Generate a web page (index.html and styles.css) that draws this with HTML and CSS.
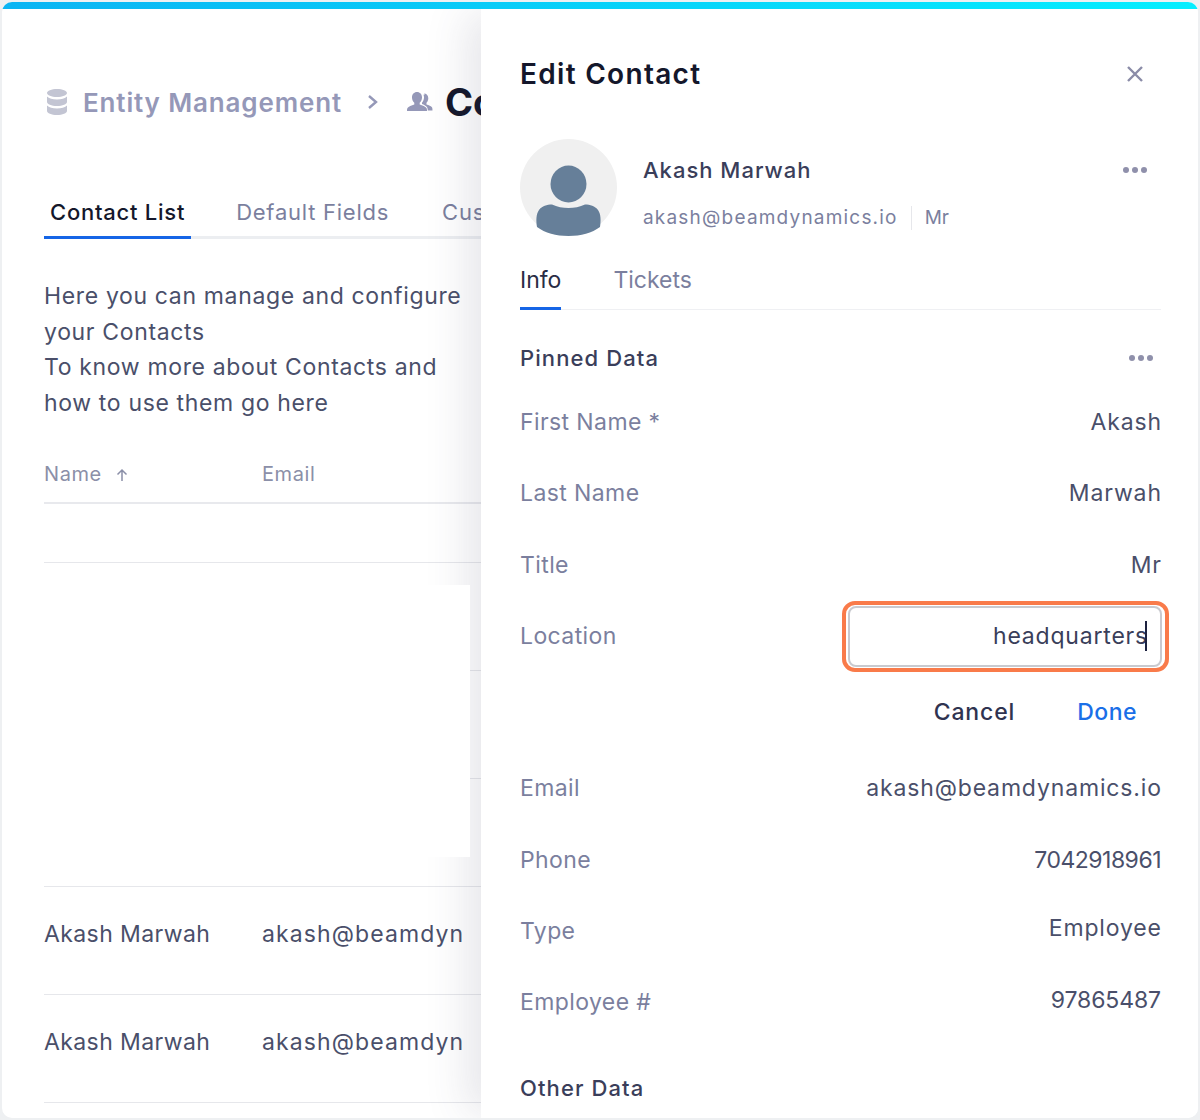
FILE: index.html
```html
<!DOCTYPE html>
<html lang="en">
<head>
<meta charset="utf-8">
<title>Edit Contact</title>
<link rel="stylesheet" href="styles.css">
</head>
<body>
<div class="frame">
  <div class="topbar"></div>
  <div class="stage">
    <main class="page">
      <div class="crumbs">
        <svg class="ic-db" width="22" height="28" viewBox="0 0 22 28"><path fill="#c3c5d3" d="M11 1c5.500 0 10 1.800 10 4s-4.500 4-10 4S1 7.200 1 5s4.500-4 10-4zM1 8.500c1.800 1.900 5.700 3 10 3s8.200-1.100 10-3V14c0 2.200-4.500 4-10 4S1 16.200 1 14zM1 17.500c1.800 1.900 5.700 3 10 3s8.200-1.100 10-3V23c0 2.200-4.500 4-10 4S1 25.200 1 23z"/></svg>
        <span class="crumb">Entity Management</span>
        <svg class="ic-chev" width="12" height="16" viewBox="0 0 12 16"><path d="M2 2l7 6-7 6" fill="none" stroke="#9598b8" stroke-width="2.400"/></svg>
        <svg class="ic-users" width="28" height="24" viewBox="0 0 28 24"><path fill="#9598b8" d="M11 2c3 0 5 2.300 5 5.500 0 2.200-.9 4.200-2.300 5.300v1.700c2.700.8 5.800 2 6.800 3.500.5.800.5 2.500.5 3H1c0-.5 0-2.200.5-3 1-1.500 4.100-2.700 6.800-3.500v-1.700C6.900 11.700 6 9.700 6 7.500 6 4.300 8 2 11 2z"/><path fill="#9598b8" d="M18 3.500c2.400 0 4.300 2 4.300 4.800 0 1.900-.7 3.500-1.800 4.500v1.600c2.200.7 4.800 1.700 5.600 3 .4.700.4 2.600.4 3.100h-4.700c0-1.400-.3-3-1.100-3.800-1.200-1.200-2.700-2.100-4.700-2.800v-1.200c1.300-1.500 2-3.500 2-5.200 0-1-.2-1.900-.5-2.700.6-.2 1.200-.3 1.500-.3z"/></svg>
        <span class="crumb-current">Contacts</span>
      </div>
      <nav class="tabs">
        <span class="tab tab-active">Contact List</span>
        <span class="tab">Default Fields</span>
        <span class="tab">Custom Fields</span>
      </nav>
      <p class="intro">Here you can manage and configure<br>your Contacts<br>To know more about Contacts and<br>how to use them go here</p>
      <div class="thead">
        <span class="col-name">Name <svg class="ic-up" width="14" height="14" viewBox="0 0 14 14"><path d="M7 13V2M2.500 6.500L7 2l4.500 4.500" fill="none" stroke="#8b8fa8" stroke-width="1.500"/></svg></span>
        <span class="col-email">Email</span>
      </div>
      <div class="row row-short"></div>
      <div class="row"></div>
      <div class="row"></div>
      <div class="row"></div>
      <div class="row"><span class="col-name">Akash Marwah</span><span class="col-email">akash@beamdyn</span></div>
      <div class="row"><span class="col-name">Akash Marwah</span><span class="col-email">akash@beamdyn</span></div>
    </main>

    <aside class="drawer">
      <header class="drawer-head">
        <h1 class="drawer-title">Edit Contact</h1>
        <svg class="ic-close" width="20" height="20" viewBox="0 0 20 20"><path d="M3 3l14 14M17 3L3 17" fill="none" stroke="#8b8ca8" stroke-width="2.400"/></svg>
      </header>
      <section class="profile">
        <svg class="avatar" width="97" height="97" viewBox="0 0 97 97"><circle cx="48.500" cy="48.500" r="48.500" fill="#f0f0f0"/><ellipse cx="48.500" cy="45" rx="18" ry="18.500" fill="#667f99"/><path fill="#667f99" d="M17 88c-1-6-1-13 2-17 3-4 8-5.500 13-5.500 5 2.500 11 3.500 16.500 3.500s11.500-1 16.500-3.500c5 0 10 1.500 13 5.500 3 4 3 11 2 17-8 6-19 9-31.500 9S25 94 17 88z"/></svg>
        <div class="profile-text">
          <div class="profile-name">Akash Marwah</div>
          <div class="profile-sub"><span>akash@beamdynamics.io</span><span class="profile-title">Mr</span></div>
        </div>
        <span class="dots dots-profile"><i></i><i></i><i></i></span>
      </section>
      <nav class="drawer-tabs">
        <span class="dtab dtab-active">Info</span>
        <span class="dtab">Tickets</span>
      </nav>
      <div class="section-head">
        <h2 class="section-title">Pinned Data</h2>
        <span class="dots"><i></i><i></i><i></i></span>
      </div>
      <dl class="fields">
        <div class="field"><dt>First Name *</dt><dd>Akash</dd></div>
        <div class="field"><dt>Last Name</dt><dd>Marwah</dd></div>
        <div class="field"><dt>Title</dt><dd>Mr</dd></div>
        <div class="field"><dt>Location</dt><dd class="ring"><span class="input"><span>headquarters</span><i class="caret"></i></span></dd></div>
        <div class="actions"><span class="btn-cancel">Cancel</span><span class="btn-done">Done</span></div>
        <div class="field"><dt>Email</dt><dd>akash@beamdynamics.io</dd></div>
        <div class="field"><dt>Phone</dt><dd class="num">7042918961</dd></div>
        <div class="field"><dt>Type</dt><dd class="raised">Employee</dd></div>
        <div class="field"><dt>Employee #</dt><dd class="num-wide raised">97865487</dd></div>
      </dl>
      <h2 class="section-title other">Other Data</h2>
    </aside>
    <div class="mask"></div>
  </div>
</div>
</body>
</html>
```
FILE: styles.css
```css
* { box-sizing: border-box; }
html, body { margin: 0; padding: 0; height: 100%; }
body { background: #eef0f2; font-family: "Inter", "Liberation Sans", sans-serif; overflow: hidden; }
.frame { margin: 2px 2px 0; height: 1116px; background: #fff; border-radius: 10px; overflow: hidden; display: flex; flex-direction: column; }
.topbar { height: 7px; flex: none; background: linear-gradient(90deg, #0bb4f3, #06eeff); }
.stage { position: relative; flex: 1; overflow: hidden; }
.page { padding: 0 0 0 42px; width: 479px; overflow: hidden; }

.crumbs { display: flex; align-items: center; height: 36px; margin-top: 75px; white-space: nowrap; }
.crumbs svg { flex: none; }
.ic-db { margin-left: 2px; }
.crumb { margin-left: 15px; font-size: 26px; font-weight: 600; letter-spacing: .85px; color: #9598b8; flex: none; }
.ic-chev { margin-left: 25px; }
.ic-users { margin-left: 27px; }
.crumb-current { margin-left: 11px; font-size: 38px; font-weight: 700; color: #14172b; flex: none; }

.tabs { display: flex; margin-top: 63px; height: 56px; border-bottom: 3px solid #eceef1; white-space: nowrap; }
.tab { flex: none; font-size: 22px; letter-spacing: .75px; color: #7b7f9e; margin-left: 45px; padding-top: 16px; height: 56px; }
.tab:first-child { margin-left: 0; padding: 16px 6px 0; }
.tab:last-child { margin-left: 53px; }
.tab-active { color: #14172b; font-weight: 500; border-bottom: 3px solid #1565e6; }

.intro { margin: 40px 0 0; font-size: 23px; line-height: 35.500px; letter-spacing: .65px; color: #4a4f6a; white-space: nowrap; }

.thead { display: flex; align-items: center; height: 54px; margin-top: 29px; padding-bottom: 4px; font-size: 20px; letter-spacing: .6px; color: #8b8fa8; border-bottom: 2px solid #e8e9ed; white-space: nowrap; }
.col-name { width: 218px; flex: none; }
.ic-up { margin-left: 7px; vertical-align: -1px; }
.col-email { flex: none; }
.row { display: flex; align-items: center; height: 108px; padding-bottom: 14px; border-bottom: 1px solid #e6e7eb; font-size: 23px; letter-spacing: .4px; color: #4a4f6a; white-space: nowrap; }
.row .col-email { letter-spacing: 1.100px; }
.row-short { height: 59px; }

.drawer { position: absolute; left: 479px; top: 0; right: 0; bottom: 0; background: #fff; padding: 0 37px 0 39px; box-shadow: -18px 0 40px -4px rgba(60, 65, 90, .13); z-index: 1; }
.drawer-head { display: flex; justify-content: space-between; align-items: center; height: 60px; margin-top: 35px; padding-right: 16px; }
.drawer-title { margin: 0; font-size: 28px; font-weight: 600; letter-spacing: 1.300px; color: #14172b; }
.profile { display: flex; margin-top: 35px; height: 97px; position: relative; }
.avatar { flex: none; }
.profile-text { margin-left: 26px; }
.profile-name { margin-top: 15px; font-size: 22px; font-weight: 500; line-height: 32px; letter-spacing: 1px; color: #3a3e5a; }
.profile-sub { display: flex; align-items: center; margin-top: 20px; font-size: 19px; line-height: 24px; letter-spacing: 1.200px; color: #7b7f9e; }
.profile-title { margin-left: 13px; padding-left: 13px; border-left: 1px solid #e6e7eb; letter-spacing: 0; }
.dots { display: flex; gap: 3px; flex: none; }
.dots i { width: 6px; height: 6px; border-radius: 50%; background: #8f90ab; }
.dots-profile { position: absolute; right: 14px; top: 28px; }

.drawer-tabs { display: flex; gap: 52px; margin-top: 22px; height: 52px; border-bottom: 1px solid #eff0f3; font-size: 23px; }
.dtab { color: #7b7f9e; height: 52px; padding-top: 8px; }
.dtab-active { color: #2a2d45; border-bottom: 3px solid #1565e6; }

.section-head { display: flex; justify-content: space-between; align-items: center; height: 36px; margin-top: 30px; padding-right: 8px; }
.section-title { margin: 0; font-size: 22px; font-weight: 500; letter-spacing: 1.100px; color: #3a3e5a; }
.fields { margin: 10.500px 0 0; }
.field { display: flex; justify-content: space-between; align-items: center; height: 71.300px; font-size: 23px; }
.field dt { color: #7b7f9e; letter-spacing: .4px; }
.field dd { margin: 0; color: #4a4f6a; letter-spacing: .85px; margin-right: -.85px; }
.field dd.num { letter-spacing: -.5px; margin-right: 0; }
.field dd.num-wide { letter-spacing: -.1px; margin-right: 0; }
.field dd.raised { padding-bottom: 5px; }
.field dd.ring { margin-right: -8px; padding: 1px 3px 1px 2px; background: #fff; border: 4px solid #f97b4a; border-radius: 13px; letter-spacing: .8px; }
.input { position: relative; display: flex; align-items: center; justify-content: flex-end; width: 314px; height: 61px; padding-right: 12px; background: #fff; border: 2px solid #c9cacf; border-radius: 8px; color: #3a3e5a; }
.caret { position: absolute; right: 13px; top: 13px; width: 2px; height: 30px; background: #1d2240; }
.actions { display: flex; justify-content: flex-end; align-items: center; gap: 62px; height: 81px; padding-right: 24px; padding-bottom: 1px; font-size: 23px; font-weight: 500; letter-spacing: .85px; }
.btn-cancel { color: #2f3350; }
.btn-done { color: #1a6fe8; letter-spacing: .5px; }
.other { margin-top: 37px; }

.mask { position: absolute; left: 0; top: 576px; width: 468px; height: 272px; background: #fff; z-index: 2; }
```
